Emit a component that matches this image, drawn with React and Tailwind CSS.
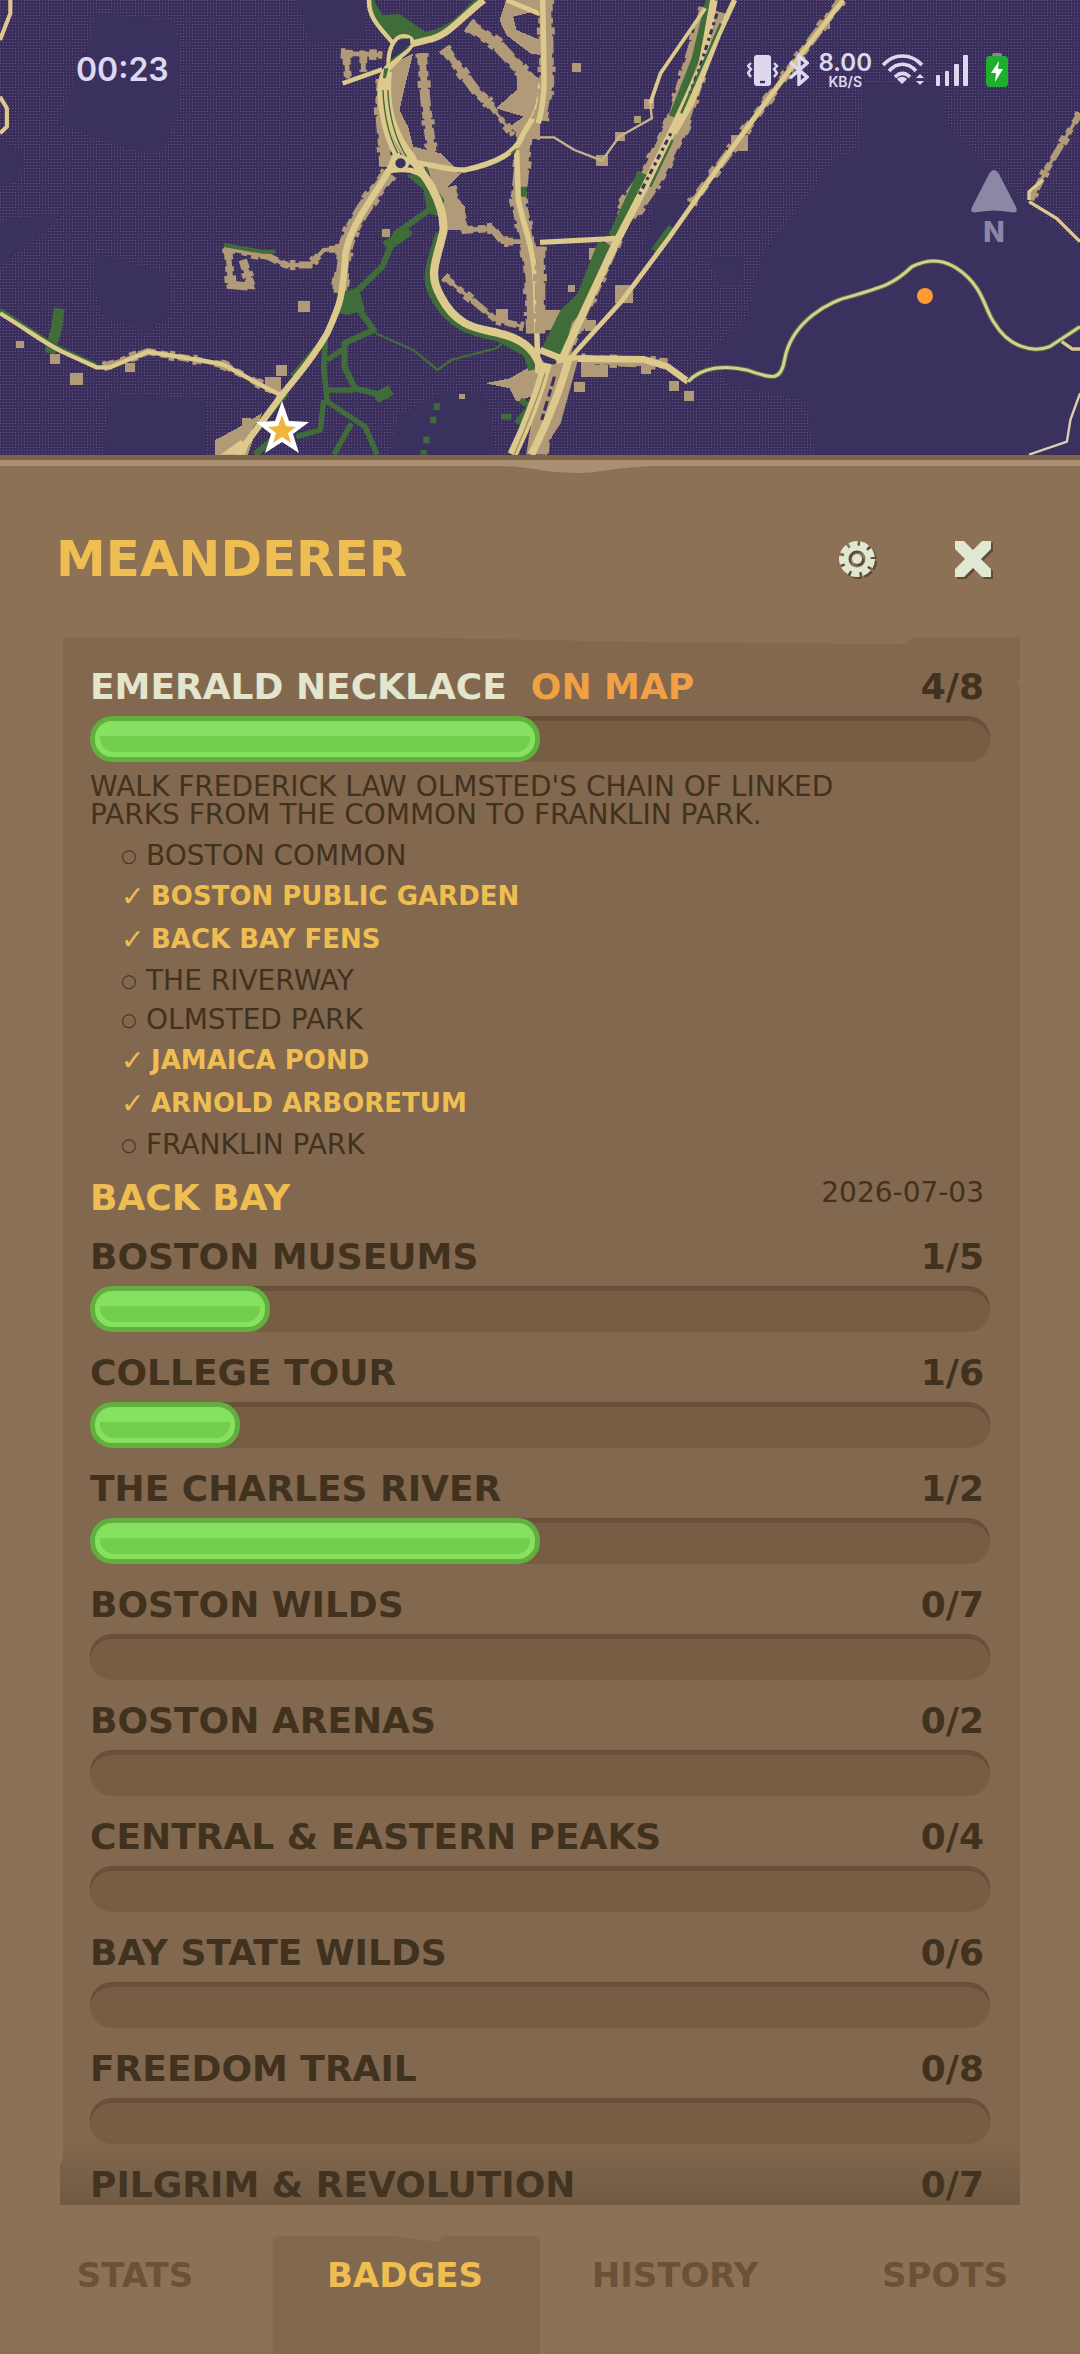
import React from 'react';

const stops = [
  { name: 'Boston Common', done: false },
  { name: 'Boston Public Garden', done: true },
  { name: 'Back Bay Fens', done: true },
  { name: 'The Riverway', done: false },
  { name: 'Olmsted Park', done: false },
  { name: 'Jamaica Pond', done: true },
  { name: 'Arnold Arboretum', done: true },
  { name: 'Franklin Park', done: false },
];

const badges = [
  { name: 'Boston Museums', found: 1, total: 5 },
  { name: 'College Tour', found: 1, total: 6 },
  { name: 'The Charles River', found: 1, total: 2 },
  { name: 'Boston Wilds', found: 0, total: 7 },
  { name: 'Boston Arenas', found: 0, total: 2 },
  { name: 'Central & Eastern Peaks', found: 0, total: 4 },
  { name: 'Bay State Wilds', found: 0, total: 6 },
  { name: 'Freedom Trail', found: 0, total: 8 },
  { name: 'Pilgrim & Revolution', found: 0, total: 7 },
];

const tabs = ['Stats', 'Badges', 'History', 'Spots'];

// [x, y, size]
const westBlocks = [
  [865, 903, 34], [47, 1022, 22], [202, 1118, 38], [364, 1088, 28], [1440, 928, 36],
  [145, 1062, 30], [702, 1255, 28], [800, 1095, 34], [1110, 688, 22], [770, 1130, 46], [1334, 1182, 16],
];
const eastBlocks = [
  [92, 188, 28], [272, 348, 22], [302, 298, 28], [218, 396, 28], [164, 466, 32], [143, 745, 34],
  [218, 856, 52], [130, 960, 34], [118, 1090, 42], [160, 1095, 36], [292, 1092, 30], [374, 1142, 30],
  [418, 1172, 30], [100, 1145, 32], [80, 855, 22], [0, 930, 60], [815, 60, 26], [555, 405, 48],
];

const Street = ({ d, width = 20 }) => (
  <g fill="none" stroke="#b19a78">
    <path d={d} strokeWidth={width} />
    <path d={d} strokeWidth={width + 9} strokeDasharray="34 20 16 38 52 14 22 30" />
    <path d={d} strokeWidth={width + 18} strokeDasharray="12 70 22 96 16 54" />
  </g>
);

const Road = ({ d, width = 18, color = '#dcc98c' }) => (
  <path d={d} fill="none" stroke={color} strokeWidth={width} strokeLinejoin="round" />
);

const Park = ({ d, width = 20 }) => (
  <path d={d} fill="none" stroke="#3f6c38" strokeWidth={width} strokeLinejoin="round" />
);

const TownMap = () => (
  <svg className="absolute inset-0 w-full h-full" viewBox="0 0 1080 455" preserveAspectRatio="xMidYMid slice" aria-hidden="true">
    <defs>
      <pattern id="fog" width="3" height="3" patternUnits="userSpaceOnUse">
        <rect width="3" height="3" fill="#3a2f5c" />
        <rect width="1" height="1" fill="#66537f" />
      </pattern>
    </defs>
    <rect width="1080" height="455" fill="url(#fog)" />

    {/* west half */}
    <g transform="scale(.3444 .3333)">
      <g fill="#3a315f">
        <path d="M280 40 500 60 520 120 520 330 470 460 380 450 170 370 200 280 260 120Z" />
        <path d="M280 760 490 820 490 950 430 1000 300 950 270 860Z" />
        <path d="M300 1364 320 1180 600 1200 600 1364Z" />
        <path d="M860 0 1060 0 1060 110 900 130Z" />
        <path d="M0 420 70 460 60 540 0 560ZM0 660 180 640 100 720 0 800Z" />
        <path d="M1280 1180 1410 1180 1440 1364 1130 1364 1160 1240Z" />
      </g>
      <g fill="#b19a78" shapeRendering="crispEdges">
        <path d="M1400 0H1470L1450 60 1470 105 1540 160 1568 165V120L1500 90 1490 50 1568 30V0Z" />
        <path d="M1500 200 1568 235V420L1510 410 1480 380 1520 350 1440 325 1500 270Z" />
        <path d="M1120 200 1200 160 1180 240 1160 330 1185 380 1200 440 1280 460 1330 510 1240 510 1170 470 1120 400 1090 300Z" />
        <path d="M1240 500 1340 520 1300 560 1350 620 1350 690 1300 690Z" />
        <path d="M1410 1150 1480 1135 1540 1100 1568 1110 1568 1180 1500 1205 1480 1165Z" />
        <path d="M625 1364V1320L680 1290 760 1240 720 1364Z" />
        {westBlocks.map(([x, y, s]) => <rect key={`${x}-${y}`} x={x} y={y} width={s} height={s} />)}
      </g>
      <Street d="M1225 160 1235 300 1255 470" width={20} />
      <Street d="M1290 145 1380 270 1420 310" width={20} />
      <Street d="M1420 310 1490 405" width={8} />
      <Street d="M1360 75 1440 130 1540 240" width={28} />
      <Street d="M1310 560 1350 690 1430 685 1460 725 1550 725" width={14} />
      <Street d="M650 745 780 770 830 795 900 795 940 750 1010 745" width={12} />
      <Street d="M662 745 670 855 730 860 705 780" width={16} />
      <Street d="M990 160 1110 165M1005 160 1010 235M1055 155V215" width={14} />
      <Street d="M1115 240C1100 330 1120 420 1120 500" width={30} />
      <Street d="M1130 520C1080 590 1010 680 1000 760L985 880" width={34} />
      <Street d="M1525 400 1505 600C1520 680 1540 740 1545 850L1550 1000" width={36} />
      <Street d="M1290 830 1440 960 1520 980" width={10} />
      <Street d="M300 1100 430 1055 650 1095 815 1185" width={12} />

      <path fill="#3f6c38" d="M1072 0C1080 50 1100 95 1140 115L1200 128C1290 115 1350 50 1400 0H1375C1330 50 1290 90 1235 95L1160 42 1110 45 1085 0Z" />
      <path fill="#3f6c38" d="M1180 525 1235 520 1290 600 1280 650 1240 640 1230 570Z" />
      <path fill="#3f6c38" d="M990 880 1040 860 1060 930 1010 945 980 940Z" />
      <Park d="M1260 620 1150 700 1110 800 1030 880 1050 940 1085 990 1000 1030 1000 1100 1030 1165 1130 1190" width={18} />
      <Park d="M1120 740 1190 690M1090 1195 1135 1170" width={32} />
      <Park d="M945 1010 940 1100 950 1205 1060 1280 1095 1364M940 1200 930 1290 860 1310M1020 1270 970 1364M950 1170H1030M1000 1045 950 1080" width={16} />
      <Park d="M1090 1000 1200 1050 1270 1110 1310 1080 1440 1045 1470 1020" width={7} />
      <Park d="M172 925 165 980 145 1060" width={32} />
      <Park d="M650 735 760 755 800 755" width={12} />
      <Park d="M830 1180 740 1290M790 1320 740 1364M850 1130 940 1020" width={18} />
      <Park d="M1275 700C1250 790 1225 840 1265 900C1320 1000 1400 1000 1450 1015L1530 1060 1545 1110" width={22} />
      <Park d="M1520 560V590M1510 1200 1540 1220 1500 1270M1455 1250H1485M1268 1210V1230M1258 1250V1270M1238 1310V1330M1230 1350V1364" width={18} />
      <Park d="M0 932C80 985 130 1025 180 1050L280 1098" width={16} />

      <Road d="M1072 0C1068 55 1110 90 1140 128" width={13} />
      <Road d="M1405 0C1340 50 1300 112 1240 120L1195 132 1125 205C1085 250 1115 400 1155 470" width={20} />
      <Road d="M1128 200C1125 160 1140 110 1170 108C1215 110 1195 145 1170 165" width={12} />
      <Road d="M1125 215C1115 320 1135 400 1200 480" width={26} />
      <path fill="none" stroke="#3f6c38" strokeWidth="4" d="M1112 270C1115 350 1130 410 1155 460M1126 270C1130 350 1150 420 1180 470" />
      <path fill="#3f6c38" d="M1115 205H1128L1120 235H1112ZM1130 190 1150 150 1190 140Z" />
      <Road d="M995 250 1110 208" width={14} />
      <Road d="M1150 460 1125 520M1120 515C1160 505 1230 500 1250 560" width={16} />
      <Road d="M1130 510C1080 600 1020 670 1003 760C995 900 985 920 950 1000C900 1090 860 1130 815 1190L690 1364" width={19} />
      <Road d="M1190 470C1230 520 1290 600 1288 690C1270 780 1240 820 1280 890C1330 990 1400 985 1450 1000C1530 1020 1560 1060 1575 1120" width={24} />
      <Road d="M1180 485C1250 490 1300 512 1350 510C1440 490 1500 460 1520 400C1550 350 1568 330 1570 250" width={16} />
      <Road d="M1500 450 1505 600C1520 680 1550 740 1555 850L1562 1120" width={16} />
      <Road d="M0 940C80 990 130 1030 180 1055L280 1102 320 1102 430 1055C500 1070 600 1080 650 1095C700 1120 760 1160 815 1185" width={13} />
      <Road d="M1470 0 1568 42" width={14} />
      <Road d="M30 0V40L0 120M0 290 20 325V380L0 400" width={12} />
      <path fill="#dcc98c" d="M640 1364 700 1320 720 1340 712 1364Z" />
      <circle cx="1163" cy="490" r="20" fill="#3a315f" stroke="#dcc98c" strokeWidth="10" />
      <path fill="#3a315f" d="M1135 180 1160 120 1190 115 1192 135Z" />
      <path fill="#3f6c38" d="M1480 460 1500 445 1495 462ZM1230 500 1248 525 1240 500Z" />
    </g>

    {/* east half */}
    <g transform="translate(540) scale(.3444 .3333)">
      <path fill="#3a315f" d="M940 250H1170L1180 370 1310 500 1420 620 1568 740V1364H800L770 1200 550 1160 490 1060 600 950 650 750 800 560 850 480 930 440Z" />
      <path fill="#3a315f" d="M340 580H430L380 700 300 760ZM480 770H590V850H520Z" />
      <Street d="M500 30 400 370 330 520 250 640" width={64} />
      <Street d="M250 640 200 760 80 1040 20 1270" width={30} />
      <Street d="M15 0 20 250 0 360" width={34} />
      <Street d="M875 0 760 160 540 470 440 610" width={16} />
      <Street d="M120 1080 370 1090M30 1100 10 1364M0 740V1000" width={22} />
      <Street d="M1568 340 1470 510 1425 600" width={10} />
      <g fill="#b19a78" shapeRendering="crispEdges">
        {eastBlocks.map(([x, y, s]) => <rect key={`${x}-${y}`} x={x} y={y} width={s} height={s} />)}
      </g>
      <Park d="M492 0 450 180 385 350" width={22} />
      <Park d="M300 520 215 710" width={34} />
      <Park d="M190 730 125 900 70 960 50 1060" width={44} />
      <path fill="#3f6c38" d="M60 930 130 860 60 1065 5 1045Z" />
      <Park d="M380 680 330 750" width={16} />
      <Road d="M505 0 470 200 390 380 300 570 215 740 80 1040 0 1230" width={22} />
      <Road d="M565 0 520 100 440 310 390 400" width={16} />
      <path fill="none" stroke="#3a315f" strokeWidth="9" strokeDasharray="9 13 16 11" d="M520 20 465 200 435 280M380 400 330 500 285 590" />
      <Park d="M525 70 410 340M385 420 320 560" width={7} />
      <Road d="M480 25 350 220 320 310" width={11} />
      <Road d="M320 310 325 355 230 410 180 482 100 450 40 412H0" width={7} color="#c6b28c" />
      <Road d="M880 0 760 160 540 470 370 720 240 900 100 1060 20 1230 0 1330" width={14} />
      <Road d="M0 727 225 715" width={16} />
      <Road d="M8 0 12 250C10 320 0 350-5 370" width={16} />
      <Road d="M0 1050 60 1075 300 1078 370 1100 430 1145" width={20} />
      {/* interchange: two carriageways heading off the bottom edge */}
      <path fill="#b19a78" d="M0 1100 110 1080 60 1270 0 1364H-40Z" />
      <Road d="M20 1090C-10 1200-40 1280-80 1364" width={30} />
      <Road d="M85 1070C60 1170 20 1270-25 1364" width={22} />
      <path fill="none" stroke="#3a315f" strokeWidth="9" strokeDasharray="30 10 22 14" d="M42 1130 5 1260" />
      <path fill="none" stroke="#a8925e" strokeWidth="4" d="M15 1120C-10 1210-40 1280-75 1364" />
      <Road d="M430 1145C470 1100 540 1095 600 1110C680 1140 700 1140 710 1080C730 960 850 900 900 890C1000 860 1030 850 1080 800C1140 770 1180 785 1210 805C1290 860 1290 930 1320 970C1360 1040 1430 1060 1480 1040L1568 980" width={15} color="#566c46" />
      <Road d="M430 1145C470 1100 540 1095 600 1110C680 1140 700 1140 710 1080C730 960 850 900 900 890C1000 860 1030 850 1080 800C1140 770 1180 785 1210 805C1290 860 1290 930 1320 970C1360 1040 1430 1060 1480 1040L1568 980" width={9} color="#d6d08e" />
      <Road d="M1420 605 1500 655 1568 725M1515 1025 1545 1047H1568" width={10} />
      <Road d="M1420 600V575L1460 540" width={10} />
      <Road d="M1420 1364 1530 1325 1540 1260 1568 1180" width={7} color="#dccfb0" />
    </g>

    <circle cx="925" cy="296" r="8" fill="#fd9a33" />
    <path fill="#fff" d="M282 401 289 421 309 422 293 434 299 453 282 442 265 453 271 434 256 422 275 421Z" />
    <path fill="#f0b53c" d="M282 415 286 426 296 427 288 433 291 443 282 437 273 443 276 433 268 427 278 426Z" />
  </svg>
);

const StatusBar = () => (
  <div className="relative flex items-center justify-between pt-[48px] pl-[76px] pr-[72px] text-[#ddd8f0]">
    <time className="font-['Inter'] text-[32px] leading-[44px] font-semibold">00:23</time>
    <div className="flex items-center gap-[10px]">
      <svg className="w-8 h-8" viewBox="0 0 32 32" fill="none" stroke="currentColor" strokeWidth="2.4" aria-hidden="true">
        <rect x="7" y="1" width="17" height="31" rx="3" fill="currentColor" stroke="none" />
        <path d="M13 28h5" stroke="#3a315f" />
        <path d="M4 9 1 12l3 3-3 4 3 4M27 9l3 3-3 3 3 4-3 4" />
      </svg>
      <svg className="w-5 h-8" viewBox="0 0 20 32" fill="none" stroke="currentColor" strokeWidth="3.6" aria-hidden="true">
        <path d="M1 8 18 23 10 30V2l8 7L1 24" />
      </svg>
      <div className="font-['Inter'] font-semibold flex flex-col items-center">
        <span className="text-[24px] leading-[24px]">8.00</span>
        <span className="text-[14px] leading-[14px]">KB/S</span>
      </div>
      <svg className="w-[42px] h-8 mr-[2px]" viewBox="0 0 42 32" fill="none" stroke="currentColor" strokeWidth="3.6" aria-hidden="true">
        <path d="M1 11C12-1 29-1 40 11M7 17c8-9 19-9 27 0M13 23c5-5 10-5 15 0" />
        <path d="m15 25 5 5 5-5c-3-3-7-3-10 0ZM34 24l4-4 4 4ZM34 27l4 4 4-4Z" fill="currentColor" stroke="none" />
      </svg>
      <svg className="w-8 h-8 mr-2" viewBox="0 0 32 32" fill="currentColor" aria-hidden="true">
        <rect x="0" y="21" width="4" height="11" rx="1" />
        <rect x="9" y="17" width="4" height="15" rx="1" />
        <rect x="18" y="10" width="5" height="22" rx="1" />
        <rect x="27" y="1" width="5" height="31" rx="1" />
      </svg>
      <svg className="w-[22px] h-[34px]" viewBox="0 0 22 34" aria-hidden="true">
        <rect x="6" y="0" width="10" height="6" rx="2" fill="#8b8699" />
        <rect x="0" y="3" width="22" height="31" rx="4" fill="#1fae2d" />
        <path d="M13 8 5 20h5l-1 9 8-13h-5Z" fill="#fff" />
      </svg>
    </div>
  </div>
);

const ProgressBar = ({ label, found, total }) => (
  <div
    role="progressbar"
    aria-label={label}
    aria-valuenow={found}
    aria-valuemin={0}
    aria-valuemax={total}
    className="h-[46px] rounded-[22px] bg-[#765d44] shadow-[inset_0_5px_0_#695139]"
  >
    {found > 0 && (
      <div
        className="h-full rounded-[22px] border-[5px] border-[#62ae3e] bg-[#86e160] px-[5px] pb-[5px] flex items-end"
        style={{ width: `${(found / total) * 100}%` }}
      >
        <div className="w-full h-[16px] rounded-b-[14px] bg-[#73ce4b]" />
      </div>
    )}
  </div>
);

const BadgeHeader = ({ children, found, total }) => (
  <div className="flex items-center justify-between h-[54px] pr-[6px]">
    <h2 className="flex gap-6 text-[36px] leading-[54px] font-bold">{children}</h2>
    <span className="text-[36px] leading-[54px] font-bold">{found}/{total}</span>
  </div>
);

const App = () => {
  return (
    <div className="h-screen flex flex-col overflow-hidden bg-[#8c7154] font-['DejaVu_Sans',sans-serif] uppercase">
      <header className="relative h-[455px] shrink-0 overflow-hidden bg-[#3a315f]">
        <TownMap />
        <StatusBar />
        <div className="relative flex justify-end pt-[76px] pr-[62px]">
          <button type="button" aria-label="Face north" className="flex flex-col items-center text-[#8d87a6]">
            <svg className="w-[48px] h-[48px]" viewBox="0 0 48 48" fill="currentColor" aria-hidden="true">
              <path d="M19 6q5-8 10 0l17 33q3 7-6 5-16-3-32 0-9 2-6-5Z" />
            </svg>
            <span className="font-['Inter'] text-[28px] leading-[32px] font-extrabold">N</span>
          </button>
        </div>
      </header>

      <svg className="block w-full h-[20px] shrink-0" viewBox="0 0 1080 20" preserveAspectRatio="none" aria-hidden="true">
        <path d="M0 0H1080V5H0Z" fill="#7e6448" />
        <path d="M0 5H1080V11H650C610 13 600 18 577 18 545 18 535 12 500 11H0Z" fill="#ab8f73" />
      </svg>

      <main className="flex-1 min-h-0 flex flex-col">
        <div className="flex items-center justify-between h-[162px] pt-[6px] pl-[56px] pr-[80px] shrink-0">
          <h1 className="text-[50px] leading-[60px] font-bold text-[#efbe53]">Meanderer</h1>
          <div className="flex items-center gap-[62px]">
            <button type="button" aria-label="Settings" className="p-[8px]">
              <svg className="w-[38px] h-[38px] drop-shadow-[2px_2px_0_#5e4a35]" viewBox="0 0 38 38" aria-hidden="true">
                <circle cx="19" cy="19" r="15.5" fill="none" stroke="#e0e8d2" strokeWidth="5" strokeDasharray="8.3 2.52" />
                <circle cx="19" cy="19" r="11" fill="none" stroke="#e0e8d2" strokeWidth="5" />
                <circle cx="19" cy="19" r="5" fill="#e0e8d2" />
              </svg>
            </button>
            <button type="button" aria-label="Close" className="p-[8px]">
              <svg className="w-[38px] h-[38px] drop-shadow-[2px_2px_0_#5e4a35]" viewBox="0 0 38 38" fill="#e0e8d2" aria-hidden="true">
                <path d="M1 1H10L19 10 28 1H37V9L27 19 37 29V37H28L19 28 10 37H1V29L11 19 1 9Z" />
              </svg>
            </button>
          </div>
        </div>

        <section
          aria-label="Badges"
          className="relative flex-1 min-h-0 overflow-hidden mx-[60px] px-[30px] pt-[23px] bg-[#82684e] text-[#41311f] [clip-path:polygon(3px_2px,6px_0,35%_0,60%_5px,88%_7px,89%_0,100%_0,100%_42px,99.6%_46px,100%_50px,100%_100%,0_100%,0_calc(100%-40px),3px_calc(100%-46px))]"
        >
          <BadgeHeader found={4} total={8}>
            <span className="text-[#e3e5cc]">Emerald Necklace</span>
            <span className="text-[#f1a044]">On map</span>
          </BadgeHeader>
          <div className="pt-[2px]">
            <ProgressBar label="Emerald Necklace" found={4} total={8} />
          </div>
          <p className="pt-[11px] pr-[60px] text-[28px] leading-[28px]">
            Walk Frederick Law Olmsted's chain of linked parks from the Common to Franklin Park.
          </p>
          <ul className="pt-[7px] pl-[31px]">
            {stops.map((stop) =>
              stop.done ? (
                <li key={stop.name} className="flex items-center gap-[8px] h-[43px] text-[#efbe53]">
                  <span className="w-[22px] text-[28px]" aria-label="Visited">✓</span>
                  <span className="text-[26px] font-bold">{stop.name}</span>
                </li>
              ) : (
                <li key={stop.name} className="flex items-center gap-[8px] h-[39px]">
                  <span className="w-[17px] text-[18px]" aria-label="Not visited">○</span>
                  <span className="text-[28px]">{stop.name}</span>
                </li>
              )
            )}
          </ul>
          <div className="flex items-start justify-between pt-[7px] pr-[6px]">
            <h2 className="text-[36px] leading-[54px] font-bold text-[#efbe53]">Back Bay</h2>
            <time dateTime="2026-07-03" className="text-[28px] leading-[44px]">2026-07-03</time>
          </div>
          <ul className="pt-[5px] flex flex-col gap-[14px]">
            {badges.map((badge) => (
              <li key={badge.name} className="flex flex-col gap-[2px]">
                <BadgeHeader found={badge.found} total={badge.total}>{badge.name}</BadgeHeader>
                <ProgressBar label={badge.name} found={badge.found} total={badge.total} />
              </li>
            ))}
          </ul>
          <div className="absolute inset-x-0 bottom-0 h-[68px] bg-gradient-to-b from-transparent to-[#4a3a2a]/30 pointer-events-none" />
        </section>
      </main>

      <nav className="grid grid-cols-4 h-[118px] mt-[31px] shrink-0">
        {tabs.map((tab) => (
          <button
            key={tab}
            type="button"
            aria-current={tab === 'Badges' ? 'page' : undefined}
            className={`uppercase text-[34px] leading-[40px] pb-[40px] font-bold ${
              tab === 'Badges'
                ? 'text-[#efbe53] bg-[#82684e] [clip-path:polygon(1%_2px,3%_0,46%_0,62%_6px,64%_0,98%_0,100%_3px,100%_100%,1%_100%)]'
                : 'text-[#6b5138]'
            }`}
          >
            {tab}
          </button>
        ))}
      </nav>
    </div>
  );
};

export default App;
